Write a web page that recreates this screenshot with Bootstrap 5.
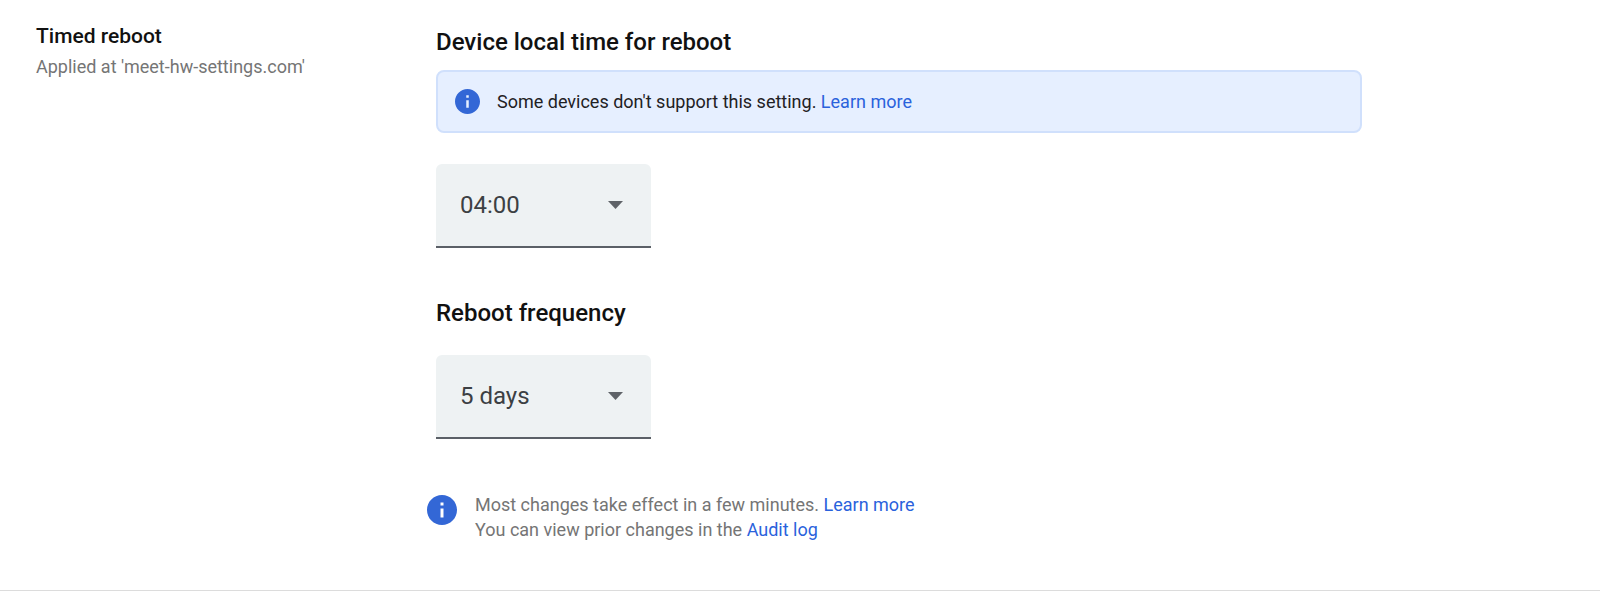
<!DOCTYPE html>
<html lang="en">
<head>
<meta charset="utf-8">
<meta name="viewport" content="width=device-width, initial-scale=1">
<title>Timed reboot</title>
<link href="https://cdn.jsdelivr.net/npm/bootstrap@5.3.0/dist/css/bootstrap.min.css" rel="stylesheet">
<style>
  body { font-family: Roboto, "Liberation Sans", sans-serif; font-size: 18px; line-height: 25px; color: #111; background: #fff; }
  a { color: #2a62dc; text-decoration: none; }
  a:hover { text-decoration: underline; }
  .setting { border-bottom: 1px solid #dcdcdc; padding: 24px 0 48px; }
  .setting-side { padding-left: 36px; }
  .setting-main { padding-left: 27px; padding-right: 27px; }
  .setting-title { font-size: 21px; line-height: 25px; font-weight: 500; margin: 0 0 5px; }
  .setting-source, .hint { color: #757575; }
  .fields { padding-left: 9px; }
  .field-title { font-size: 24px; line-height: 36px; font-weight: 500; margin: 0; }
  .notice { max-width: 926px; padding: 17px; margin: 10px 0 31px; gap: 17px; color: #1f2124; background: #e6efff; border: 2px solid #d0e0fc; border-radius: 8px; }
  .picker { width: 215px; height: 84px; padding: 0 24px; font-size: 24px; color: #3c4043; border: 0; border-bottom: 2px solid #5b6067; border-radius: 6px 6px 0 0;
    background: #eef2f3 url("data:image/svg+xml,%3Csvg xmlns='http://www.w3.org/2000/svg' viewBox='0 0 14 7' preserveAspectRatio='none'%3E%3Cpath fill='%235f6368' d='M0 0h14L7 7z'/%3E%3C/svg%3E") no-repeat right 28px center / 15px 8px; }
  .picker + .field-title { margin: 47px 0 24px; }
  .hint { gap: 18px; margin-top: 53px; }
  .hint svg { margin-top: 3px; }
</style>
</head>
<body>
<section class="setting container-fluid">
  <div class="row g-0">
    <div class="col-3 setting-side">
      <h2 class="setting-title">Timed reboot</h2>
      <p class="setting-source mb-0">Applied at 'meet-hw-settings.com'</p>
    </div>
    <div class="col-9 setting-main">
      <form class="fields">
        <label class="field-title d-block" for="time">Device local time for reboot</label>
        <div class="notice d-flex align-items-center">
          <svg class="flex-shrink-0" width="25" height="25" viewBox="2 2 20 20" aria-hidden="true"><path fill="#3367d6" d="M12 2C6.480 2 2 6.480 2 12s4.480 10 10 10 10-4.480 10-10S17.520 2 12 2zm1 15h-2v-6h2v6zm0-8h-2V7h2v2z"/></svg>
          <span>Some devices don't support this setting. <a href="#">Learn more</a></span>
        </div>
        <select class="picker form-select" id="time"><option>04:00</option></select>
        <label class="field-title d-block" for="frequency">Reboot frequency</label>
        <select class="picker form-select" id="frequency"><option>5 days</option></select>
      </form>
      <div class="hint d-flex align-items-start">
        <svg class="flex-shrink-0" width="30" height="30" viewBox="2 2 20 20" aria-hidden="true"><path fill="#3367d6" d="M12 2C6.480 2 2 6.480 2 12s4.480 10 10 10 10-4.480 10-10S17.520 2 12 2zm1 15h-2v-6h2v6zm0-8h-2V7h2v2z"/></svg>
        <div>Most changes take effect in a few minutes. <a href="#">Learn more</a><br>You can view prior changes in the <a href="#">Audit log</a></div>
      </div>
    </div>
  </div>
</section>
<script src="https://cdn.jsdelivr.net/npm/bootstrap@5.3.0/dist/js/bootstrap.bundle.min.js"></script>
</body>
</html>
